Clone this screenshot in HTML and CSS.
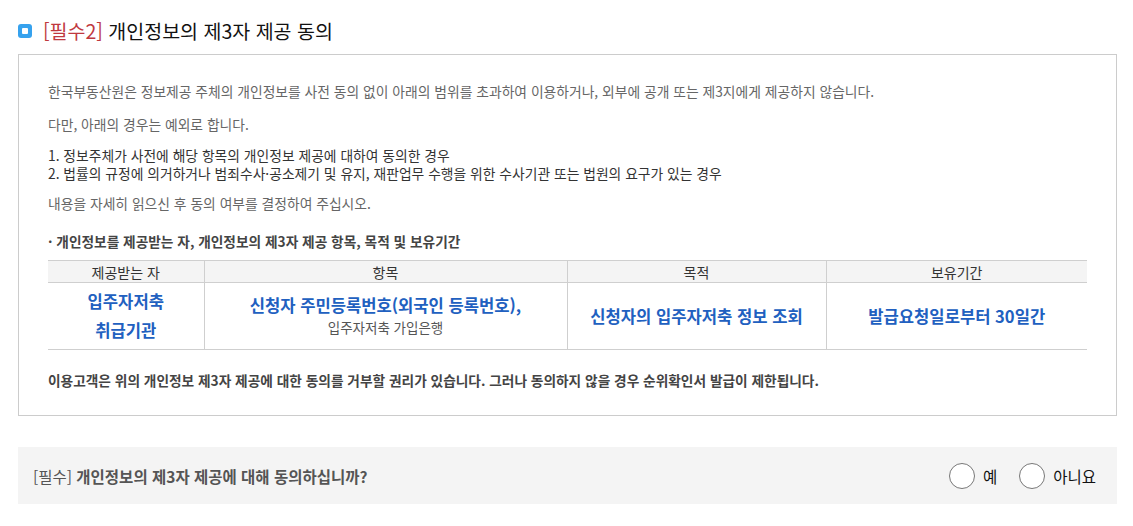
FILE: index.html
```html
<!DOCTYPE html>
<html lang="ko">
<head>
<meta charset="utf-8">
<title>개인정보의 제3자 제공 동의</title>
<link rel="stylesheet" href="styles.css">
</head>
<body>
<div class="page">
  <h2 class="title"><span class="icon"><span class="icon-inner"></span></span><span class="req">[필수2]</span> 개인정보의 제3자 제공 동의</h2>
  <div class="box">
    <p class="p1">한국부동산원은 정보제공 주체의 개인정보를 사전 동의 없이 아래의 범위를 초과하여 이용하거나, 외부에 공개 또는 제3지에게 제공하지 않습니다.</p>
    <p class="p2">다만, 아래의 경우는 예외로 합니다.</p>
    <ol class="list">
      <li>1. 정보주체가 사전에 해당 항목의 개인정보 제공에 대하여 동의한 경우</li>
      <li>2. 법률의 규정에 의거하거나 범죄수사·공소제기 및 유지, 재판업무 수행을 위한 수사기관 또는 법원의 요구가 있는 경우</li>
    </ol>
    <p class="p3">내용을 자세히 읽으신 후 동의 여부를 결정하여 주십시오.</p>
    <p class="sub">· 개인정보를 제공받는 자, 개인정보의 제3자 제공 항목, 목적 및 보유기간</p>
    <table class="tbl">
      <colgroup>
        <col class="c1"><col class="c2"><col class="c3"><col class="c4">
      </colgroup>
      <thead>
        <tr><th>제공받는 자</th><th>항목</th><th>목적</th><th>보유기간</th></tr>
      </thead>
      <tbody>
        <tr>
          <td class="blue two">입주자저축<br>취급기관</td>
          <td><div class="blue">신청자 주민등록번호(외국인 등록번호),</div><div class="small">입주자저축 가입은행</div></td>
          <td class="blue">신청자의 입주자저축 정보 조회</td>
          <td class="blue">발급요청일로부터 30일간</td>
        </tr>
      </tbody>
    </table>
    <p class="note">이용고객은 위의 개인정보 제3자 제공에 대한 동의를 거부할 권리가 있습니다. 그러나 동의하지 않을 경우 순위확인서 발급이 제한됩니다.</p>
  </div>
  <div class="agree">
    <div class="q"><span class="q-req">[필수]</span> 개인정보의 제3자 제공에 대해 동의하십니까?</div>
    <div class="opts">
      <label class="opt"><span class="radio"></span>예</label>
      <label class="opt"><span class="radio"></span>아니요</label>
    </div>
  </div>
</div>
</body>
</html>
```

FILE: styles.css
```css
* { box-sizing: border-box; }
html, body { margin: 0; padding: 0; background: #fff; }
body {
  font-family: "Noto Sans CJK KR", "Noto Sans", sans-serif;
  color: #333;
  width: 1133px;
  height: 526px;
  overflow: hidden;
}
.page { padding: 19px 16px 0 18px; }
.title {
  display: flex;
  align-items: center;
  margin: 0 0 11px 0;
  height: 24px;
  font-size: 19.5px;
  font-weight: 400;
  color: #111;
  line-height: 24px;
  white-space: pre;
}
.icon {
  width: 14px;
  height: 14px;
  border-radius: 3px;
  background: #36a2ee;
  display: flex;
  align-items: center;
  justify-content: center;
  margin-right: 11px;
}
.icon-inner {
  width: 6px;
  height: 6px;
  background: #fff;
  border-radius: 1px;
}
.req { color: #c0393f; }
.box {
  border: 1px solid #cccccc;
  padding: 27px 29px 26px 29px;
  width: 1099px;
}
.box p, .box ol { margin: 0; padding: 0; }
.p1, .p2, .p3 {
  font-size: 13.8px;
  line-height: 18px;
  color: #666;
}
.p2 { margin-top: 15px !important; }
.list {
  list-style: none;
  margin-top: 13px !important;
  font-size: 13.8px;
  line-height: 18px;
  color: #333;
}
.p3 { margin-top: 12px !important; }
.sub {
  margin-top: 20px !important;
  font-size: 13.7px;
  line-height: 18px;
  font-weight: 700;
  color: #444;
}
.tbl {
  margin-top: 10px;
  width: 1039px;
  border-collapse: collapse;
  table-layout: fixed;
  border-top: 1px solid #cfcfcf;
  border-bottom: 1px solid #cfcfcf;
}
.c1 { width: 156px; }
.c2 { width: 363px; }
.c3 { width: 259px; }
.c4 { width: 261px; }
.tbl th {
  background: #f4f4f4;
  font-size: 14px;
  font-weight: 400;
  color: #333;
  height: 22px;
  padding: 0;
  line-height: 20px;
  border-bottom: 1px solid #cfcfcf;
  border-left: 1px solid #cfcfcf;
}
.tbl td {
  height: 67px;
  padding: 0;
  text-align: center;
  vertical-align: middle;
  border-left: 1px solid #cfcfcf;
}
.tbl th:first-child, .tbl td:first-child { border-left: none; }
.blue {
  color: #2160c0;
  font-size: 16.6px;
  font-weight: 700;
}
.two { line-height: 29px; padding-top: 0 !important; }
.tbl td .blue { line-height: 22px; }
.small {
  font-size: 13.5px;
  color: #555;
  line-height: 22px;
}
.note {
  margin-top: 21px !important;
  font-size: 13.7px;
  line-height: 18px;
  font-weight: 700;
  color: #444;
}
.agree {
  margin-top: 31px;
  width: 1099px;
  height: 57px;
  background: #f4f4f4;
  display: flex;
  align-items: center;
  justify-content: space-between;
  padding: 0 21px 0 15px;
}
.q {
  font-size: 15.5px;
  font-weight: 700;
  color: #555;
}
.q-req { font-weight: 400; }
.opts {
  display: flex;
  align-items: center;
  gap: 22px;
}
.opt {
  display: flex;
  align-items: center;
  font-size: 15.5px;
  color: #111;
}
.radio {
  width: 26px;
  height: 26px;
  border-radius: 50%;
  border: 1px solid #777;
  background: #fff;
  margin-right: 8px;
}
```
